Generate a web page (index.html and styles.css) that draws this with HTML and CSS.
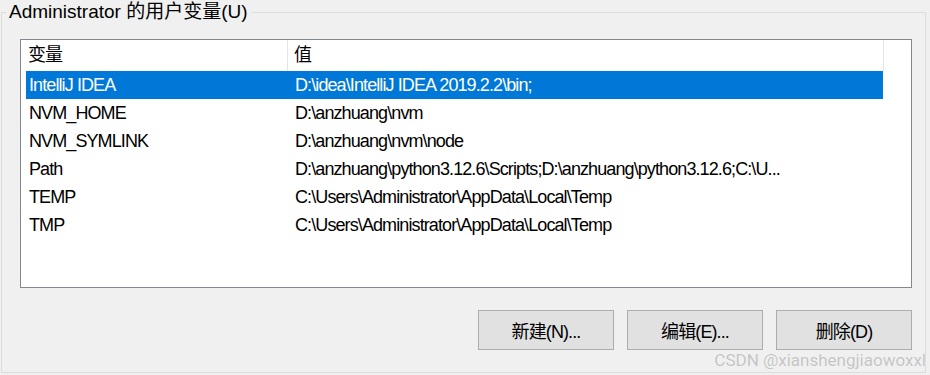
FILE: index.html
```html
<!DOCTYPE html>
<html lang="zh-CN">
<head>
    <meta charset="UTF-8">
    <meta name="viewport" content="width=device-width, initial-scale=1.0">
    <title>环境变量</title>
    <link rel="stylesheet" href="styles.css">
</head>
<body>
    <fieldset class="group">
        <legend class="group-title">Administrator 的用户变量(U)</legend>
        <div class="group-body">
            <div class="list">
                <div class="list-head">
                    <div class="head-cell name">变量</div>
                    <div class="head-cell value">值</div>
                </div>
                <div class="row selected">
                    <div class="cell name">IntelliJ IDEA</div>
                    <div class="cell value">D:\idea\IntelliJ IDEA 2019.2.2\bin;</div>
                </div>
                <div class="row">
                    <div class="cell name">NVM_HOME</div>
                    <div class="cell value">D:\anzhuang\nvm</div>
                </div>
                <div class="row">
                    <div class="cell name">NVM_SYMLINK</div>
                    <div class="cell value">D:\anzhuang\nvm\node</div>
                </div>
                <div class="row">
                    <div class="cell name">Path</div>
                    <div class="cell value">D:\anzhuang\python3.12.6\Scripts;D:\anzhuang\python3.12.6;C:\U...</div>
                </div>
                <div class="row">
                    <div class="cell name">TEMP</div>
                    <div class="cell value">C:\Users\Administrator\AppData\Local\Temp</div>
                </div>
                <div class="row">
                    <div class="cell name">TMP</div>
                    <div class="cell value">C:\Users\Administrator\AppData\Local\Temp</div>
                </div>
            </div>
            <div class="buttons">
                <button class="btn">新建(N)...</button>
                <button class="btn">编辑(E)...</button>
                <button class="btn">删除(D)</button>
            </div>
        </div>
    </fieldset>
    <div class="watermark">CSDN @xianshengjiaowoxxl</div>
</body>
</html>
```
FILE: styles.css
```css
body {
    margin: 0;
    width: 930px;
    height: 375px;
    overflow: hidden;
    position: relative;
    background-color: #f0f0f0;
    color: #000;
    font-family: "Liberation Sans", "Noto Sans CJK SC", sans-serif;
    font-size: 18px;
    letter-spacing: -0.9px;
}
.group {
    margin: 0 4px 2px 1px;
    padding: 0;
    border: 1px solid #dcdcdc;
    min-width: 0;
}
.group-title {
    margin-left: 4px;
    padding: 0 3px;
    line-height: 24px;
    font-size: 19px;
    letter-spacing: 0;
}
.group-body {
    padding: 15px 13px 22px 18px;
}
.list {
    height: 249px;
    box-sizing: border-box;
    border: 1px solid #828790;
    background-color: #fff;
}
.list-head {
    display: flex;
    height: 31px;
    line-height: 31px;
}
.head-cell {
    box-sizing: border-box;
    border-right: 1px solid #e5e5e5;
    white-space: nowrap;
}
.head-cell.name {
    width: 267px;
    padding-left: 7px;
}
.head-cell.value {
    width: 596px;
    padding-left: 6px;
}
.row {
    display: flex;
    width: 857px;
    height: 28px;
    margin-left: 5px;
    line-height: 28px;
    white-space: nowrap;
}
.row.selected {
    background-color: #0078d7;
    color: #fff;
}
.cell.name {
    width: 261px;
    box-sizing: border-box;
    padding-left: 3px;
}
.cell.value {
    flex: 1;
    padding-left: 8px;
    overflow: hidden;
}
.buttons {
    display: flex;
    justify-content: flex-end;
    gap: 13px;
    margin-top: 22px;
}
.btn {
    width: 136px;
    height: 40px;
    padding: 0;
    border: 1px solid #adadad;
    background-color: #e1e1e1;
    color: #000;
    font-family: inherit;
    font-size: 18px;
    letter-spacing: inherit;
}
.watermark {
    position: absolute;
    right: 4px;
    bottom: 5px;
    color: #c4c4c4;
    font-family: "Roboto", "Noto Sans", sans-serif;
    font-size: 17px;
    letter-spacing: 0;
    text-shadow: 0 0 1px #fff;
    white-space: nowrap;
}
```
